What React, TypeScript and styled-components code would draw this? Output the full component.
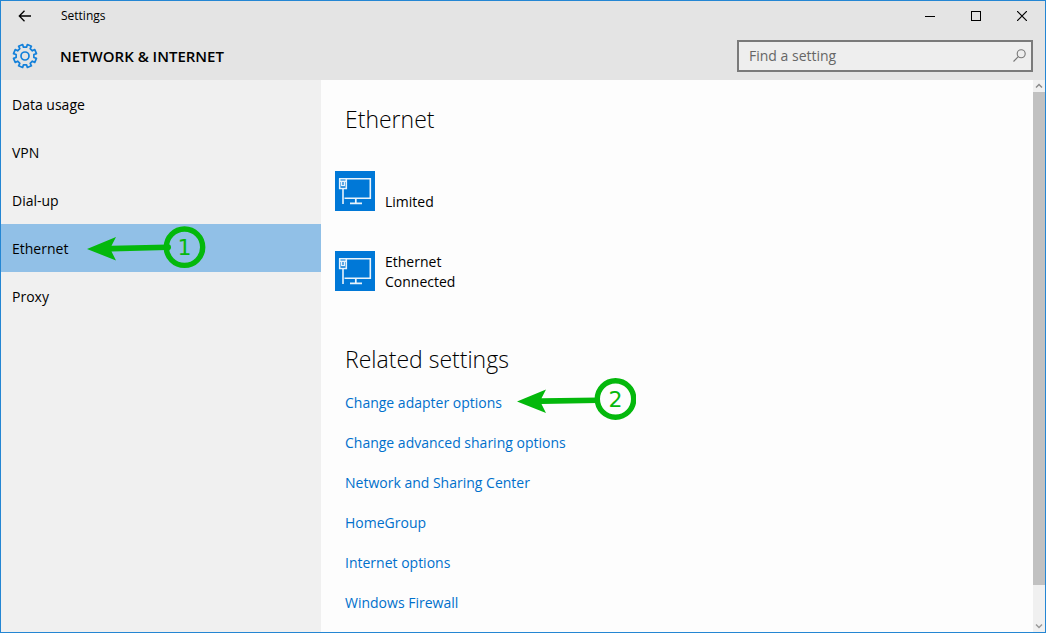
import React from "react";
import styled, { createGlobalStyle } from "styled-components";

const GlobalStyle = createGlobalStyle`
  *, *::before, *::after { box-sizing: border-box; }
  body {
    margin: 0;
    color: #000;
    background: #fdfdfd;
    font-family: "Open Sans", "Noto Sans", sans-serif;
    font-size: 14px;
    line-height: 20px;
  }
`;

const Window = styled.div`
  display: flex;
  flex-direction: column;
  min-height: 100vh;
  border: 1px solid #2486d3;
`;

const Header = styled.header`
  background: #e4e4e4;
`;

const TitleBar = styled.div`
  display: flex;
  align-items: center;
  height: 30px;
`;

const WindowTitle = styled.span`
  flex: 1;
  padding-left: 12px;
  font-size: 12px;
`;

const CaptionButton = styled.button`
  display: grid;
  place-items: center;
  width: 46px;
  height: 30px;
  padding: 0;
  border: 0;
  color: #000;
  background: transparent;
`;

const BackButton = styled(CaptionButton)`
  width: 48px;
`;

const SectionBar = styled.div`
  display: flex;
  align-items: center;
  height: 49px;
  padding: 0 12px 0 10px;
`;

const SectionTitle = styled.h1`
  flex: 1;
  margin: 0;
  padding-left: 21px;
  font-size: 15px;
  font-weight: 600;
`;

const SearchField = styled.label`
  display: flex;
  align-items: center;
  width: 296px;
  height: 32px;
  padding: 0 5px 0 10px;
  border: 2px solid #7a7a7a;
  background: #eee;
`;

const SearchInput = styled.input`
  flex: 1;
  min-width: 0;
  padding: 0;
  border: 0;
  outline: 0;
  background: transparent;
  font: inherit;
  &::placeholder { color: #666; opacity: 1; }
`;

const Body = styled.div`
  display: flex;
  flex: 1;
`;

const Sidebar = styled.nav`
  flex: 0 0 320px;
  background: #f0f0f0;
`;

const NavLink = styled.a<{ $active?: boolean }>`
  position: relative;
  display: flex;
  align-items: center;
  height: 48px;
  padding: 2px 11px 0;
  color: #000;
  text-decoration: none;
  background: ${(p) => (p.$active ? "#91c0e7" : "transparent")};
`;

const Content = styled.main`
  flex: 1;
  padding: 23px 14px 0;
`;

const Heading = styled.h2`
  margin: 0;
  padding-left: 10px;
  font-size: 23px;
  font-weight: 300;
  line-height: 32px;
`;

const AdapterList = styled.div`
  display: flex;
  flex-direction: column;
  align-items: flex-start;
  gap: 40px;
  margin: 36px 0 52px;
`;

const Adapter = styled.button`
  display: flex;
  align-items: flex-start;
  gap: 10px;
  height: 40px;
  padding: 0;
  border: 0;
  color: inherit;
  background: transparent;
  font: inherit;
  text-align: left;
`;

const AdapterTile = styled.span`
  width: 40px;
  height: 40px;
  background: #0078d7;
`;

const AdapterText = styled.span`
  display: flex;
  flex-direction: column;
  justify-content: flex-end;
  height: 41px;
`;

const LinkList = styled.ul`
  display: flex;
  flex-direction: column;
  gap: 20px;
  margin: 18px 0 0;
  padding: 0 0 0 10px;
  list-style: none;
`;

const LinkItem = styled.li`
  display: flex;
`;

const SettingLink = styled.a`
  position: relative;
  color: #0070cc;
  text-decoration: none;
`;

const Callout = styled.svg<{ $left: string }>`
  position: absolute;
  bottom: 0;
  left: ${(p) => p.$left};
  width: 120px;
  height: 44px;
`;

const NavCallout = styled(Callout)`
  bottom: 3px;
`;

const LinkCallout = styled(Callout)`
  bottom: -9px;
`;

const ScrollTrack = styled.div`
  display: flex;
  flex-direction: column;
  width: 12px;
  background: #f0f0f0;
`;

const ScrollButton = styled.button`
  display: grid;
  place-items: center;
  height: 12px;
  padding: 0;
  border: 0;
  background: transparent;
`;

const ScrollRun = styled.div`
  flex: 1;
`;

const ScrollThumb = styled.div`
  height: 93.4%;
  background: #c1c1c1;
`;

const Gear = () => {
  const pts: string[] = [];
  const teeth = 8;
  for (let i = 0; i < teeth; i++) {
    const c = (i * 2 * Math.PI) / teeth + Math.PI / 8;
    ([[-0.22, 9], [-0.19, 11.7], [0.19, 11.7], [0.22, 9]] as const).forEach(([a, r]) => {
      pts.push(`${(14 + r * Math.cos(c + a)).toFixed(2)},${(14 + r * Math.sin(c + a)).toFixed(2)}`);
    });
  }
  return (
    <svg width="28" height="28" viewBox="0 0 28 28" fill="none" stroke="#1380da" strokeWidth="1.7" strokeLinejoin="round" aria-hidden="true">
      <polygon points={pts.join(" ")} />
      <circle cx="14" cy="14" r="4" />
    </svg>
  );
};

const AdapterIcon = () => (
  <AdapterTile>
    <svg width="40" height="40" viewBox="0 0 40 40" fill="none" stroke="#e8f3fc" aria-hidden="true">
      <path d="M4 7.8H35.3V27.2H9.5" strokeWidth="1.6" />
      <path d="M20.8 27.5V32M15 32.4H27" strokeWidth="1.7" />
      <path d="M4.7 7.5V17.5H11.3V7.5M5 10.3H11M8 18V33" strokeWidth="1.6" />
      <path d="M6.7 11V14.6H9.3V11" strokeWidth="1.4" />
    </svg>
  </AdapterTile>
);

const CalloutDrawing = ({ step }: { step: number }) => (
  <>
    <path d="M1 24L30 12L25.5 20.8L82 19.5V25L25.5 26.4L30 35.5Z" fill="#04b80c" />
    <circle cx="82" cy="22.2" r="3" fill="#04b80c" />
    <circle cx="98.5" cy="22.2" r="18.2" fill="none" stroke="#04b80c" strokeWidth="5.4" />
    <text x="98.5" y="30" textAnchor="middle" fill="#04b80c" fontFamily="DejaVu Sans, sans-serif" fontSize="22">{step}</text>
  </>
);

const LinkCalloutDrawing = ({ step }: { step: number }) => (
  <>
    <path d="M1 23.5L30 11.5L25.5 20.3L82 19.5V25L25.5 25.9L30 35Z" fill="#04b80c" />
    <circle cx="99.5" cy="21" r="18.2" fill="none" stroke="#04b80c" strokeWidth="5.4" />
    <text x="99.5" y="28.5" textAnchor="middle" fill="#04b80c" fontFamily="DejaVu Sans, sans-serif" fontSize="22">{step}</text>
  </>
);

const navItems = ["Data usage", "VPN", "Dial-up", "Ethernet", "Proxy"];

const adapters = [["Limited"], ["Ethernet", "Connected"]];

const relatedLinks = [
  "Change adapter options",
  "Change advanced sharing options",
  "Network and Sharing Center",
  "HomeGroup",
  "Internet options",
  "Windows Firewall",
];

export default function App() {
  return (
    <>
      <GlobalStyle />
      <Window>
        <Header>
          <TitleBar>
            <BackButton aria-label="Back">
              <svg width="14" height="12" viewBox="0 0 14 12" fill="none" stroke="currentColor" strokeWidth="1.3">
                <path d="M6.5 .8L1.3 6L6.5 11.2M1.3 6H13" />
              </svg>
            </BackButton>
            <WindowTitle>Settings</WindowTitle>
            <CaptionButton aria-label="Minimize">
              <svg width="10" height="10" stroke="currentColor"><path d="M0 5.5H10" /></svg>
            </CaptionButton>
            <CaptionButton aria-label="Maximize">
              <svg width="10" height="10" fill="none" stroke="currentColor"><rect x=".5" y=".5" width="9" height="9" /></svg>
            </CaptionButton>
            <CaptionButton aria-label="Close">
              <svg width="10" height="10" stroke="currentColor" strokeWidth="1.2"><path d="M0 0L10 10M10 0L0 10" /></svg>
            </CaptionButton>
          </TitleBar>
          <SectionBar>
            <Gear />
            <SectionTitle>NETWORK &amp; INTERNET</SectionTitle>
            <SearchField>
              <SearchInput type="text" placeholder="Find a setting" aria-label="Find a setting" />
              <svg width="13" height="13" viewBox="0 0 13 13" fill="none" stroke="#777" strokeWidth="1.1" aria-hidden="true">
                <circle cx="8.2" cy="4.8" r="4" />
                <path d="M5.3 7.7L.5 12.5" />
              </svg>
            </SearchField>
          </SectionBar>
        </Header>
        <Body>
          <Sidebar>
            {navItems.map((item) => (
              <NavLink key={item} href="#" $active={item === "Ethernet"} aria-current={item === "Ethernet" ? "page" : undefined}>
                {item}
                {item === "Ethernet" && (
                  <NavCallout $left="85px" viewBox="0 0 120 44">
                    <CalloutDrawing step={1} />
                  </NavCallout>
                )}
              </NavLink>
            ))}
          </Sidebar>
          <Content>
            <Heading>Ethernet</Heading>
            <AdapterList>
              {adapters.map((lines) => (
                <Adapter key={lines[0]}>
                  <AdapterIcon />
                  <AdapterText>
                    {lines.map((line) => <span key={line}>{line}</span>)}
                  </AdapterText>
                </Adapter>
              ))}
            </AdapterList>
            <Heading>Related settings</Heading>
            <LinkList>
              {relatedLinks.map((label, i) => (
                <LinkItem key={label}>
                  <SettingLink href="#">
                    {label}
                    {i === 0 && (
                      <LinkCallout $left="calc(100% + 14px)" viewBox="0 0 120 44">
                        <LinkCalloutDrawing step={2} />
                      </LinkCallout>
                    )}
                  </SettingLink>
                </LinkItem>
              ))}
            </LinkList>
          </Content>
          <ScrollTrack>
            <ScrollButton aria-label="Scroll up">
              <svg width="8" height="6" fill="none" stroke="#888" strokeWidth="1.4"><path d="M1 4.5L4 1.5L7 4.5" /></svg>
            </ScrollButton>
            <ScrollRun><ScrollThumb /></ScrollRun>
            <ScrollButton aria-label="Scroll down">
              <svg width="8" height="6" fill="none" stroke="#999" strokeWidth="1.4"><path d="M1 1.5L4 4.5L7 1.5" /></svg>
            </ScrollButton>
          </ScrollTrack>
        </Body>
      </Window>
    </>
  );
}
